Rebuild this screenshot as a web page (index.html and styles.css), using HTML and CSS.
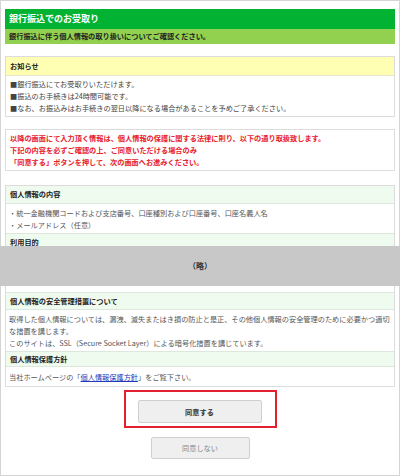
FILE: index.html
```html
<!DOCTYPE html>
<html lang="ja">
<head>
  <meta charset="UTF-8" />
  <meta name="viewport" content="width=device-width, initial-scale=1.0" />
  <title>銀行振込でのお受取り</title>
  <link rel="stylesheet" href="styles.css">
</head>
<body>
  <div class="page">
    <h1 class="title">銀行振込でのお受取り</h1>
    <p class="lead">銀行振込に伴う個人情報の取り扱いについてご確認ください。</p>

    <div class="notice">
      <div class="notice-head">お知らせ</div>
      <div class="notice-body">
        <p>■銀行振込にてお受取りいただけます。</p>
        <p>■振込のお手続きは24時間可能です。</p>
        <p>■なお、お振込みはお手続きの翌日以降になる場合があることを予めご了承ください。</p>
      </div>
    </div>

    <div class="warn">
      <p>以降の画面にて入力頂く情報は、個人情報の保護に関する法律に則り、以下の通り取扱致します。</p>
      <p>下記の内容を必ずご確認の上、ご同意いただける場合のみ</p>
      <p>「同意する」ボタンを押して、次の画面へお進みください。</p>
    </div>

    <div class="info">
      <div class="sec-head first">個人情報の内容</div>
      <div class="sec-body">
        <p>・統一金融機関コードおよび支店番号、口座種別および口座番号、口座名義人名</p>
        <p>・メールアドレス（任意）</p>
      </div>

      <div class="sec-head">利用目的</div>
      <div class="omit">（略）</div>
      <div class="sec-rest"></div>

      <div class="sec-head">個人情報の安全管理措置について</div>
      <div class="sec-body">
        <p>取得した個人情報については、漏洩、滅失またはき損の防止と是正、その他個人情報の安全管理のために必要かつ適切な措置を講じます。</p>
        <p>このサイトは、SSL（Secure Socket Layer）による暗号化措置を講じています。</p>
      </div>

      <div class="sec-head short">個人情報保護方針</div>
      <div class="sec-body last">
        <p>当社ホームページの「<a href="#">個人情報保護方針</a>」をご覧下さい。</p>
      </div>
    </div>

    <div class="actions">
      <div class="highlight">
        <button class="btn agree">同意する</button>
      </div>
      <button class="btn decline">同意しない</button>
    </div>
  </div>
</body>
</html>
```

FILE: styles.css
```css
* {
  box-sizing: border-box;
}
body {
  margin: 0;
  font-family: "Noto Sans CJK JP", "Noto Sans", sans-serif;
  font-size: 7.2px;
  color: #555;
  background: #fff;
}
p {
  margin: 0;
}
.page {
  width: 400px;
  height: 476px;
  border: 1px solid #d4d4d4;
  padding: 8px 4px 0 4px;
}
.title {
  margin: 0;
  height: 20px;
  line-height: 20px;
  padding: 0 4px;
  background: #02b232;
  color: #fff;
  font-size: 9px;
  font-weight: bold;
}
.lead {
  height: 15px;
  line-height: 15px;
  padding: 0 4px;
  background: #92d050;
  color: #222;
  font-weight: bold;
}
.notice {
  margin-top: 12px;
  border: 1px solid #dcdcdc;
}
.notice-head {
  height: 19px;
  line-height: 19px;
  padding: 0 4px;
  background: #ffffb4;
  border-bottom: 1px solid #e8e8c8;
  color: #222;
  font-weight: bold;
}
.notice-body {
  padding: 2px 4px;
  line-height: 12px;
  color: #444;
}
.warn {
  margin-top: 12px;
  border: 1px solid #dcdcdc;
  padding: 2px 4px;
  line-height: 12px;
  color: #e8202a;
  font-weight: bold;
}
.info {
  margin-top: 14px;
  border: 1px solid #dcdcdc;
}
.sec-head {
  height: 18px;
  line-height: 17px;
  padding: 0 4px;
  background: #effbef;
  border-top: 1px solid #dde8dd;
  border-bottom: 1px solid #dde8dd;
  color: #222;
  font-weight: bold;
}
.sec-head.first {
  border-top: none;
}
.sec-head.short {
  height: 16px;
  line-height: 15px;
}
.sec-body {
  padding: 3px 3px 2px 3px;
  line-height: 12px;
}
.sec-body.last {
  padding: 4px 3px 3px 3px;
}
.sec-body a {
  color: #2338b8;
}
.omit {
  position: relative;
  margin: -5px -6px 0 -6px;
  height: 40px;
  line-height: 40px;
  background: #c8c8c8;
  color: #333;
  text-align: center;
  font-size: 8px;
  font-weight: bold;
}
.sec-rest {
  height: 6px;
}
.actions {
  display: flex;
  flex-direction: column;
  align-items: center;
  gap: 9px;
  margin-top: 3px;
}
.highlight {
  border: 2px solid #e3202e;
  padding: 8px 13px 3px 12px;
}
.btn {
  display: block;
  font-family: inherit;
  font-size: 7.2px;
  background: #efefef;
  border: 1px solid #cfcfcf;
  border-radius: 2px;
  padding: 0;
}
.agree {
  width: 124px;
  height: 23px;
  color: #333;
  font-weight: bold;
}
.decline {
  width: 99px;
  height: 22px;
  color: #888;
}
```
